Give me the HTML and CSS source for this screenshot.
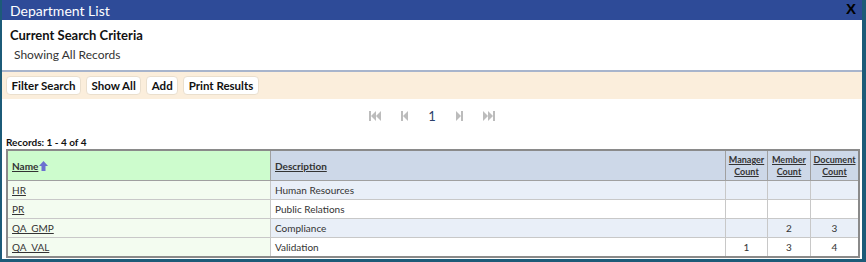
FILE: index.html
```html
<!DOCTYPE html>
<html lang="en">
<head>
  <meta charset="UTF-8">
  <title>Department List</title>
  <link rel="stylesheet" href="styles.css">
</head>
<body>
  <div class="window">
    <div class="titlebar">
      <span class="title">Department List</span>
      <span class="close">X</span>
    </div>

    <div class="criteria">
      <h2>Current Search Criteria</h2>
      <p>Showing All Records</p>
    </div>

    <div class="toolbar">
      <button>Filter Search</button>
      <button>Show All</button>
      <button>Add</button>
      <button>Print Results</button>
    </div>

    <div class="pager">
      <svg width="12" height="10" viewBox="0 0 12 10"><rect x="0" y="0" width="2" height="10"/><path d="M7 0 L2 5 L7 10 Z"/><path d="M12 0 L7 5 L12 10 Z"/></svg>
      <svg width="7" height="10" viewBox="0 0 7 10"><rect x="0" y="0" width="2" height="10"/><path d="M7 0 L2 5 L7 10 Z"/></svg>
      <span class="page">1</span>
      <svg width="7" height="10" viewBox="0 0 7 10"><path d="M0 0 L5 5 L0 10 Z"/><rect x="5" y="0" width="2" height="10"/></svg>
      <svg width="12" height="10" viewBox="0 0 12 10"><path d="M0 0 L5 5 L0 10 Z"/><path d="M5 0 L10 5 L5 10 Z"/><rect x="10" y="0" width="2" height="10"/></svg>
    </div>

    <div class="records">Records: 1 - 4 of 4</div>

    <table class="grid">
      <tr>
        <th class="name-col"><a href="#">Name</a><svg class="sort" width="9" height="10" viewBox="0 0 9 10"><path d="M4.5 0 L9 5 L6.5 5 L6.5 10 L2.5 10 L2.5 5 L0 5 Z"/></svg></th>
        <th class="desc-col"><a href="#">Description</a></th>
        <th class="num mgr"><a href="#">Manager<br>Count</a></th>
        <th class="num mem"><a href="#">Member<br>Count</a></th>
        <th class="num doc"><a href="#">Document<br>Count</a></th>
      </tr>
      <tr class="alt">
        <td class="name"><a href="#">HR</a></td>
        <td>Human Resources</td>
        <td class="num"></td>
        <td class="num"></td>
        <td class="num"></td>
      </tr>
      <tr>
        <td class="name"><a href="#">PR</a></td>
        <td>Public Relations</td>
        <td class="num"></td>
        <td class="num"></td>
        <td class="num"></td>
      </tr>
      <tr class="alt">
        <td class="name"><a href="#">QA_GMP</a></td>
        <td>Compliance</td>
        <td class="num"></td>
        <td class="num">2</td>
        <td class="num">3</td>
      </tr>
      <tr>
        <td class="name"><a href="#">QA_VAL</a></td>
        <td>Validation</td>
        <td class="num">1</td>
        <td class="num">3</td>
        <td class="num">4</td>
      </tr>
    </table>
  </div>
</body>
</html>
```

FILE: styles.css
```css
body { margin: 0; font-family: Lato, "Open Sans", sans-serif; background: #fff; }
.window { width: 866px; height: 262px; box-sizing: border-box; border: 2px solid #1c5b78; border-top: 0; border-right-width: 4px; border-bottom-width: 3px; overflow: hidden; }
.titlebar { height: 20px; background: #2e4b98; display: flex; align-items: center; justify-content: space-between; padding: 0 6px 0 8px; }
.title { color: #fff; font-size: 14px; }
.close { color: #000; font-weight: bold; font-size: 15px; font-family: "Liberation Sans", sans-serif; margin-top: -3px; }
.criteria { height: 52px; padding: 7px 0 0 8px; box-sizing: border-box; border-bottom: 2px solid #a7b4cc; }
.criteria h2 { margin: 0; font-size: 13px; font-weight: bold; color: #111; }
.criteria p { margin: 4px 0 0 4px; font-size: 12px; color: #333; }
.toolbar { background: #fbeedc; height: 27px; display: flex; align-items: center; gap: 5px; padding-left: 4px; }
.toolbar button { font-family: inherit; font-size: 11.5px; font-weight: bold; color: #111; background: #fff; border: 1px solid #eadfce; border-radius: 4px; height: 19px; padding: 0 4.5px; }
.pager { height: 32px; display: flex; align-items: center; justify-content: center; gap: 0; padding-top: 2px; box-sizing: border-box; }
.pager svg { fill: #bcbcbc; margin: 0 10px; }
.pager .page { font-size: 13px; color: #2b3f6b; margin: 0 10px; }
.records { font-size: 10px; font-weight: bold; color: #111; padding: 5px 0 0 4px; height: 13px; }
.grid { margin-left: 4px; width: 854px; border-collapse: collapse; border: 2px solid #8a8a8a; font-size: 10px; color: #333; }
.grid th { height: 29px; text-align: left; padding: 0 4px; border: 1px solid #a0a0a0; background: #cdd8e8; font-weight: bold; }
.grid th.name-col { width: 254px; background: #cdfccd; }
.grid th.num { text-align: center; line-height: 12px; font-size: 9px; padding: 0 2px; }
.grid th.mgr { width: 37px; }
.grid th.mem { width: 38px; }
.grid th.doc { width: 43px; }
.grid a { color: #333; }
.grid .sort { fill: #6b6fd0; margin-left: 1px; vertical-align: -1px; }
.grid td { height: 18px; padding: 0 4px; border: 1px solid #c8c8c8; background: #fff; }
.grid tr.alt td { background: #e9eff8; }
.grid td.name, .grid tr.alt td.name { background: #f3fcf0; }
.grid td.num { text-align: center; }
```
